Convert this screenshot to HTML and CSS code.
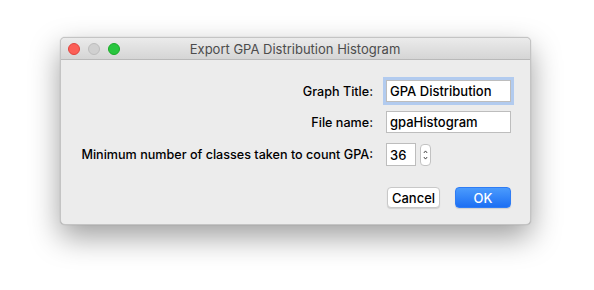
FILE: index.html
```html
<!DOCTYPE html>
<html>
<head>
  <meta charset="UTF-8">
  <title>Export GPA Distribution Histogram</title>
  <link rel="stylesheet" href="styles.css">
</head>
<body>
  <div class="stage">
    <div class="window">
      <div class="titlebar">
        <div class="lights">
          <span class="light red"></span>
          <span class="light gray"></span>
          <span class="light green"></span>
        </div>
        <div class="title">Export GPA Distribution Histogram</div>
      </div>

      <div class="content">
        <div class="form">
          <label class="label">Graph Title:</label>
          <div class="field"><input class="text focused" type="text" value="GPA Distribution"></div>

          <label class="label">File name:</label>
          <div class="field"><input class="text" type="text" value="gpaHistogram"></div>

          <label class="label row3">Minimum number of classes taken to count GPA:</label>
          <div class="field row3">
            <input class="num" type="text" value="36">
            <span class="stepper">
              <svg width="11" height="22" viewBox="0 0 11 22">
                <path d="M3.5 8.5 L5.5 6 L7.5 8.5" fill="none" stroke="#333" stroke-width="1.1"/>
                <path d="M3.5 13.5 L5.5 16 L7.5 13.5" fill="none" stroke="#333" stroke-width="1.1"/>
              </svg>
            </span>
          </div>
        </div>

        <div class="buttons">
          <button class="btn">Cancel</button>
          <button class="btn primary">OK</button>
        </div>
      </div>
    </div>
  </div>
</body>
</html>
```

FILE: styles.css
```css
body {
  margin: 0;
  background-color: #fff;
  font-family: Inter, "Liberation Sans", Arial, sans-serif;
  font-size: 12.6px;
  font-weight: 500;
  color: #000;
}

.stage {
  padding: 37px 0 0 60px;
  height: 290px;
  box-sizing: border-box;
}

.window {
  width: 471px;
  height: 188px;
  box-sizing: border-box;
  background-color: #ececec;
  border: 1px solid #c4c4c4;
  border-radius: 5px;
  box-shadow: 0 12px 30px rgba(0, 0, 0, 0.38), 0 0 1px rgba(0, 0, 0, 0.3);
  overflow: hidden;
}

.titlebar {
  display: flex;
  align-items: center;
  height: 21px;
  background: linear-gradient(#ebebeb, #d5d5d5);
  border-bottom: 1px solid #b9b9b9;
}

.lights {
  display: flex;
  gap: 8px;
  padding-left: 7px;
}

.light {
  width: 12px;
  height: 12px;
  border-radius: 50%;
  box-sizing: border-box;
}

.red {
  background-color: #fc5f57;
  border: 1px solid #e0443e;
}

.gray {
  background-color: #d0d0d0;
  border: 1px solid #bdbdbd;
}

.green {
  background-color: #29c63f;
  border: 1px solid #1aab29;
}

.title {
  flex: 1;
  text-align: center;
  color: #4c4c4c;
  font-size: 13px;
  font-weight: 400;
  margin-right: 60px;
}

.content {
  padding: 20px 19px 0 21px;
}

.form {
  display: grid;
  grid-template-columns: auto 125px;
  justify-content: end;
  column-gap: 13px;
  row-gap: 9px;
  align-items: center;
}

.label {
  text-align: right;
  white-space: nowrap;
}

.field {
  display: flex;
  align-items: center;
}

.row3 {
  margin-top: 1px;
}

.text {
  width: 125px;
  height: 22px;
  box-sizing: border-box;
  border: 1px solid #bdbdbd;
  background-color: #fff;
  font-family: inherit;
  font-size: 13px;
  font-weight: 500;
  padding: 0 3px;
  margin: 0;
  outline: none;
}

.focused {
  box-shadow: 0 0 0 3px #b2cbef;
}

.num {
  width: 30px;
  height: 23px;
  box-sizing: border-box;
  border: 1px solid #bdbdbd;
  background-color: #fff;
  font-family: inherit;
  font-size: 13px;
  font-weight: 500;
  padding: 0 3px;
  margin: 0;
  outline: none;
}

.stepper {
  display: flex;
  width: 11px;
  height: 22px;
  margin-left: 4px;
  background-color: #fff;
  border: 1px solid #c2c2c2;
  border-radius: 4px;
  box-sizing: border-box;
  overflow: hidden;
  justify-content: center;
}

.stepper svg {
  margin-top: -1px;
}

.buttons {
  display: flex;
  justify-content: flex-end;
  gap: 15px;
  margin-top: 21px;
}

.btn {
  height: 21px;
  width: 53px;
  padding: 0;
  font-family: inherit;
  font-size: 13px;
  font-weight: 500;
  background-color: #fff;
  color: #000;
  border: 1px solid #c8c8c8;
  border-radius: 4px;
  box-shadow: 0 1px 1px rgba(0, 0, 0, 0.12);
}

.primary {
  width: 56px;
  color: #fff;
  border: 1px solid #2f7cf4;
  background: linear-gradient(#4b9bfd, #1c6ff3);
}
```
